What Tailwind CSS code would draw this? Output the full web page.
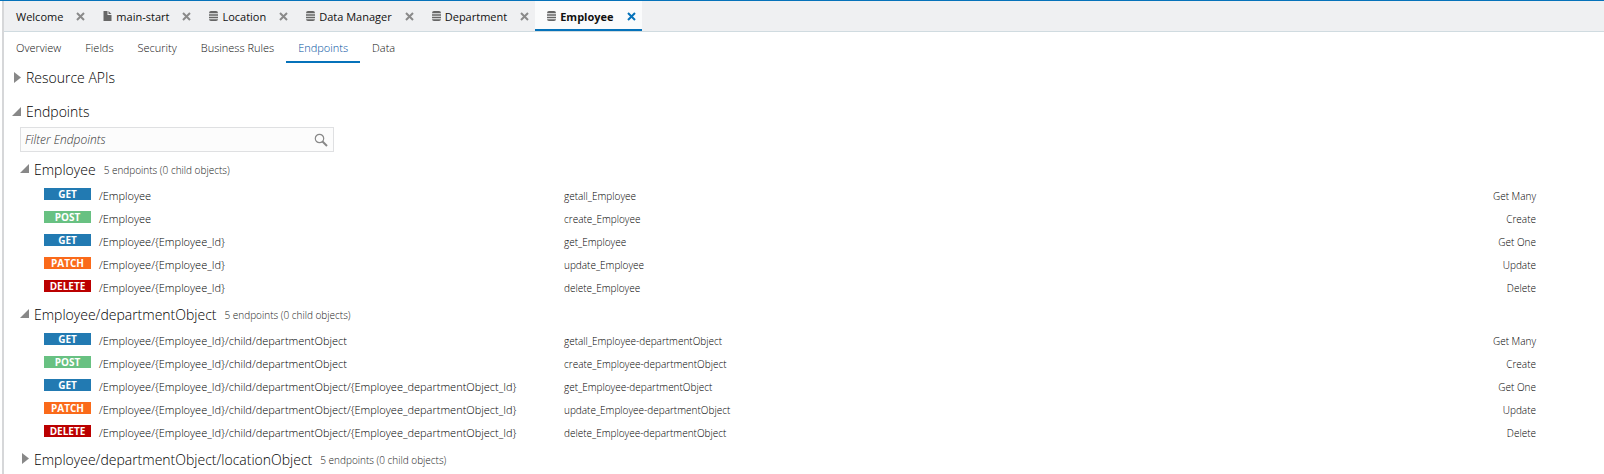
<!DOCTYPE html>
<html lang="en">
<head>
<meta charset="utf-8">
<title>Employee - Endpoints</title>
<script src="https://cdn.jsdelivr.net/npm/@tailwindcss/browser@4"></script>
</head>
<body class="bg-white font-['Open_Sans','Noto_Sans',sans-serif] text-[11px] text-[#333333]">
<svg class="hidden" aria-hidden="true">
  <symbol id="close" viewBox="0 0 9 9"><path d="M1 1L8 8M8 1L1 8" fill="none" stroke="currentColor" stroke-width="2"/></symbol>
  <symbol id="db" viewBox="0 0 9 10"><path d="M0 2.200Q0 0 2 0H7Q9 0 9 2.200ZM0 3.200H9V4.800H0ZM0 5.800H9V7.200H0ZM0 8.200H9Q9 10 7 10H2Q0 10 0 8.200Z" fill="currentColor"/></symbol>
  <symbol id="doc" viewBox="0 0 9 10"><path d="M0.500 0H4.500V4H8.500V10H0.500ZM5.500 0L8.500 3H5.500Z" fill="currentColor"/></symbol>
  <symbol id="open" viewBox="0 0 9 9"><path d="M9 0V9H0Z" fill="currentColor"/></symbol>
  <symbol id="shut" viewBox="0 0 9 11"><path d="M2 0L9 5.500L2 11Z" fill="currentColor"/></symbol>
</svg>
<div class="border-t border-[#0572ba]">
<div class="ml-[2px] border-l-2 border-[#d6d7d9] min-h-[473px]">
  <nav class="flex h-[31px] border-b border-[#d0dbe0] bg-[#eff0f2] text-[#111111]" aria-label="Open editors">
    <div class="flex h-[30px] items-center pl-3 pr-[6px]"><a href="#" class="pt-[2px]">Welcome</a><button class="ml-[13px] text-[#8a8a8a]" aria-label="Close Welcome"><svg class="size-[9px]"><use href="#close"/></svg></button></div>
    <div class="flex h-[30px] items-center pl-3 pr-[6px]"><svg class="mr-1 h-[10px] w-[9px] text-[#666666]"><use href="#doc"/></svg><a href="#" class="pt-[2px]">main-start</a><button class="ml-[13px] text-[#8a8a8a]" aria-label="Close main-start"><svg class="size-[9px]"><use href="#close"/></svg></button></div>
    <div class="flex h-[30px] items-center pl-3 pr-[6px]"><svg class="mr-1 h-[10px] w-[9px] text-[#666666]"><use href="#db"/></svg><a href="#" class="pt-[2px]">Location</a><button class="ml-[13px] text-[#8a8a8a]" aria-label="Close Location"><svg class="size-[9px]"><use href="#close"/></svg></button></div>
    <div class="flex h-[30px] items-center pl-3 pr-[6px]"><svg class="mr-1 h-[10px] w-[9px] text-[#666666]"><use href="#db"/></svg><a href="#" class="pt-[2px]">Data Manager</a><button class="ml-[13px] text-[#8a8a8a]" aria-label="Close Data Manager"><svg class="size-[9px]"><use href="#close"/></svg></button></div>
    <div class="flex h-[30px] items-center pl-3 pr-[6px]"><svg class="mr-1 h-[10px] w-[9px] text-[#666666]"><use href="#db"/></svg><a href="#" class="pt-[2px]">Department</a><button class="ml-[13px] text-[#8a8a8a]" aria-label="Close Department"><svg class="size-[9px]"><use href="#close"/></svg></button></div>
    <div class="flex h-[30px] items-center border-b-2 border-[#0572ba] bg-[#fafbfc] pt-[2px] pl-3 pr-[6px]"><svg class="mr-1 h-[10px] w-[9px] text-[#666666]"><use href="#db"/></svg><a href="#" class="pt-[2px] font-bold">Employee</a><button class="ml-[13px] text-[#0572ba]" aria-label="Close Employee"><svg class="size-[9px]"><use href="#close"/></svg></button></div>
  </nav>
  <nav class="flex h-[31px] font-light text-[#111111]" aria-label="Employee sections">
    <a href="#" class="px-3 pt-2">Overview</a>
    <a href="#" class="px-3 pt-2">Fields</a>
    <a href="#" class="px-3 pt-2">Security</a>
    <a href="#" class="px-3 pt-2">Business Rules</a>
    <a href="#" class="border-b-2 border-[#0572ba] px-3 pt-2 text-[#0050a0]">Endpoints</a>
    <a href="#" class="px-3 pt-2">Data</a>
  </nav>
  <main>
    <h2 class="mt-[5px] text-sm font-light text-black"><button class="ml-2 flex items-center"><svg class="mr-[5px] mb-[2px] h-[11px] w-[9px] text-[#888888]"><use href="#shut"/></svg>Resource APIs</button></h2>
    <h2 class="mt-[14px] text-sm font-light text-black"><button class="ml-2 flex items-center"><svg class="mr-[5px] mb-[2px] size-[9px] text-[#888888]"><use href="#open"/></svg>Endpoints</button></h2>
    <div class="ml-4 mt-[5px] flex h-[25px] w-[314px] items-center border border-[#dfe0e2] bg-[#fcfcfc] pr-[5px]">
      <input type="text" aria-label="Filter Endpoints" placeholder="Filter Endpoints" class="min-w-0 flex-1 pl-1 text-xs font-light italic outline-none placeholder:text-[#333333]">
      <svg class="size-[14px] text-[#888888]" viewBox="0 0 14 14" fill="none" stroke="currentColor"><circle cx="5.500" cy="5.500" r="4.200" stroke-width="1.200"/><path d="M8.500 8.500L13 13" stroke-width="2"/></svg>
    </div>
    <div id="groups" class="ml-4"></div>
  </main>
</div>
</div>
<script>
const BADGE = {GET:'bg-[#227ab2]', POST:'bg-[#68c182]', PATCH:'bg-[#fa6a1a]', DELETE:'bg-[#bb0000]'};
const rows = (base, item, name) => [
  ['GET', base, 'getall_' + name, 'Get Many'],
  ['POST', base, 'create_' + name, 'Create'],
  ['GET', item, 'get_' + name, 'Get One'],
  ['PATCH', item, 'update_' + name, 'Update'],
  ['DELETE', item, 'delete_' + name, 'Delete'],
];
const child = '/Employee/{Employee_Id}/child/departmentObject';
const groups = [
  ['Employee', rows('/Employee', '/Employee/{Employee_Id}', 'Employee')],
  ['Employee/departmentObject', rows(child, child + '/{Employee_departmentObject_Id}', 'Employee-departmentObject')],
  ['Employee/departmentObject/locationObject', null],
];
document.getElementById('groups').innerHTML = groups.map(([title, list]) => `
  <section>
    <h3 class="flex h-[30px] items-center pt-[6px]">
      <button class="flex items-center text-sm font-light text-black">${list
        ? '<svg class="mr-[5px] mb-1 size-[9px] text-[#888888]"><use href="#open"/></svg>'
        : '<svg class="mr-[5px] mb-1 h-[11px] w-[9px] text-[#888888]"><use href="#shut"/></svg>'}${title}</button>
      <span class="ml-2 text-[10px] font-light text-[#222222]">5 endpoints (0 child objects)</span>
    </h3>
    ${list ? `<table class="w-full table-fixed font-light text-black"><tbody>${list.map(([m, path, op, act]) => `
      <tr class="h-[23px]">
        <td class="w-[79px] pl-6"><span class="block h-3 w-[47px] text-center text-[10px] leading-3 font-bold text-white ${BADGE[m]}">${m}</span></td>
        <td class="w-[465px] whitespace-nowrap pt-[6px] text-[11px]">${path}</td>
        <td class="pt-[6px] text-[10px]">${op}</td>
        <td class="w-[168px] pr-[68px] pt-[6px] text-right text-[10px]">${act}</td>
      </tr>`).join('')}</tbody></table>` : ''}
  </section>`).join('');
</script>
</body>
</html>
